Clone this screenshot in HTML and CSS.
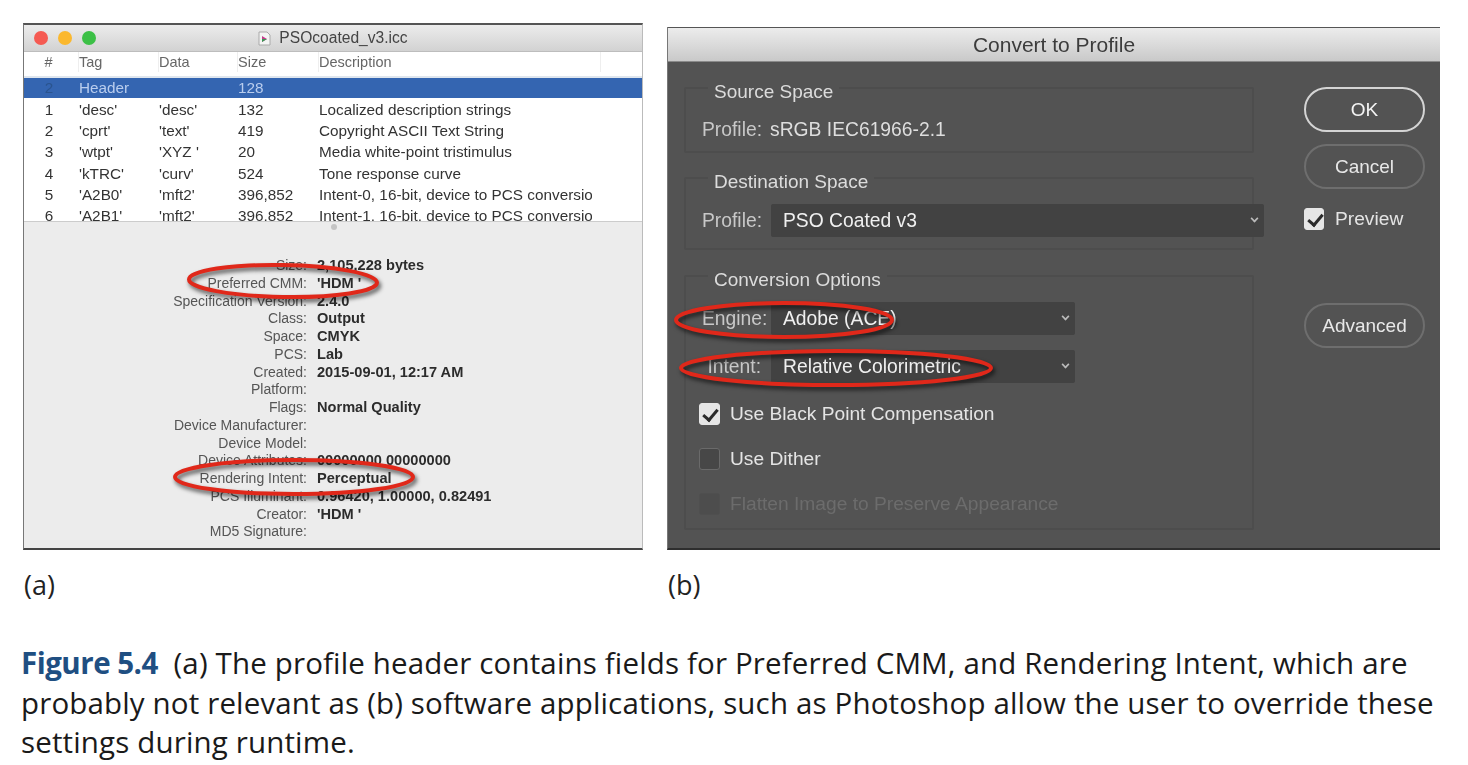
FILE: index.html
```html
<!DOCTYPE html>
<html lang="en">

<head>
  <meta charset="UTF-8">
  <title>Figure 5.4</title>
  <link rel="stylesheet" href="styles.css">
</head>

<body>
  <main class="page">
    <section class="figures">
      <div class="figure-a">
        <div class="mac-window">
          <div class="mac-title">
            <div class="lights">
              <span class="light red"></span>
              <span class="light yellow"></span>
              <span class="light green"></span>
            </div>
            <svg class="doc-icon" width="13" height="15" viewBox="0 0 13 15">
              <path d="M1 1h8l3 3v10H1z" fill="#f4f4f4" stroke="#aaa" stroke-width="1" />
              <path d="M4 5l5 3-5 3z" fill="#c43c8c" />
              <path d="M4 8l5 0-5 3z" fill="#3a9a55" />
            </svg>
            <span>PSOcoated_v3.icc</span>
          </div>
          <div class="tag-table">
            <div class="tag-head">
              <span class="num">#</span><span>Tag</span><span>Data</span><span>Size</span><span>Description</span>
            </div>
            <div class="tag-row selected">
              <span class="num">2</span><span>Header</span><span></span><span>128</span><span></span>
            </div>
            <div class="tag-row">
              <span class="num">1</span><span>'desc'</span><span>'desc'</span><span>132</span><span>Localized description strings</span>
            </div>
            <div class="tag-row">
              <span class="num">2</span><span>'cprt'</span><span>'text'</span><span>419</span><span>Copyright ASCII Text String</span>
            </div>
            <div class="tag-row">
              <span class="num">3</span><span>'wtpt'</span><span>'XYZ '</span><span>20</span><span>Media white-point tristimulus</span>
            </div>
            <div class="tag-row">
              <span class="num">4</span><span>'kTRC'</span><span>'curv'</span><span>524</span><span>Tone response curve</span>
            </div>
            <div class="tag-row">
              <span class="num">5</span><span>'A2B0'</span><span>'mft2'</span><span>396,852</span><span>Intent-0, 16-bit, device to PCS conversion</span>
            </div>
            <div class="tag-row">
              <span class="num">6</span><span>'A2B1'</span><span>'mft2'</span><span>396,852</span><span>Intent-1, 16-bit, device to PCS conversion</span>
            </div>
          </div>
          <div class="info">
            <span class="grip"></span>
            <dl class="info-list">
              <dt>Size:</dt><dd>2,105,228 bytes</dd>
              <dt>Preferred CMM:</dt><dd>'HDM '</dd>
              <dt>Specification Version:</dt><dd>2.4.0</dd>
              <dt>Class:</dt><dd>Output</dd>
              <dt>Space:</dt><dd>CMYK</dd>
              <dt>PCS:</dt><dd>Lab</dd>
              <dt>Created:</dt><dd>2015-09-01, 12:17 AM</dd>
              <dt>Platform:</dt><dd></dd>
              <dt>Flags:</dt><dd>Normal Quality</dd>
              <dt>Device Manufacturer:</dt><dd></dd>
              <dt>Device Model:</dt><dd></dd>
              <dt>Device Attributes:</dt><dd>00000000 00000000</dd>
              <dt>Rendering Intent:</dt><dd>Perceptual</dd>
              <dt>PCS Illuminant:</dt><dd>0.96420, 1.00000, 0.82491</dd>
              <dt>Creator:</dt><dd>'HDM '</dd>
              <dt>MD5 Signature:</dt><dd></dd>
            </dl>
          </div>
        </div>
        <p class="sub-label">(a)</p>
      </div>

      <div class="figure-b">
        <div class="ps-dialog">
          <div class="ps-title">Convert to Profile</div>
          <div class="ps-body">
            <div class="ps-main">
              <fieldset class="group group-source">
                <legend>Source Space</legend>
                <div class="field-row">
                  <span class="field-label">Profile:</span>
                  <span class="field-value">sRGB IEC61966-2.1</span>
                </div>
              </fieldset>
              <fieldset class="group group-dest">
                <legend>Destination Space</legend>
                <div class="field-row">
                  <span class="field-label">Profile:</span>
                  <div class="select select-wide">PSO Coated v3<span class="chevron"></span></div>
                </div>
              </fieldset>
              <fieldset class="group group-options">
                <legend>Conversion Options</legend>
                <div class="field-row">
                  <span class="field-label">Engine:</span>
                  <div class="select">Adobe (ACE)<span class="chevron"></span></div>
                </div>
                <div class="field-row">
                  <span class="field-label">Intent:</span>
                  <div class="select">Relative Colorimetric<span class="chevron"></span></div>
                </div>
                <label class="check-row first-check"><span class="check on"></span>Use Black Point Compensation</label>
                <label class="check-row"><span class="check"></span>Use Dither</label>
                <label class="check-row disabled"><span class="check"></span>Flatten Image to Preserve Appearance</label>
              </fieldset>
            </div>
            <div class="ps-side">
              <div class="pill primary">OK</div>
              <div class="pill">Cancel</div>
              <label class="check-row preview"><span class="check on"></span>Preview</label>
              <div class="pill advanced">Advanced</div>
            </div>
          </div>
        </div>
        <p class="sub-label">(b)</p>
      </div>
    </section>

    <p class="caption"><strong>Figure 5.4</strong>&nbsp; (a) The profile header contains fields for Preferred CMM, and Rendering Intent, which are<br>probably not relevant as (b) software applications, such as Photoshop allow the user to override these<br>settings during runtime.</p>

    <!-- red hand-drawn rings, page coordinates -->
    <svg class="rings" width="1468" height="765" viewBox="0 0 1468 765">
      <g fill="none" stroke="#e0281a" stroke-width="4">
        <ellipse cx="283" cy="281" rx="94" ry="16" transform="rotate(1 283 281)" />
        <ellipse cx="294" cy="477" rx="119" ry="17" />
        <ellipse cx="784" cy="320" rx="108" ry="17" />
        <ellipse cx="836" cy="368" rx="155" ry="17" />
      </g>
    </svg>
  </main>
</body>

</html>
```

FILE: styles.css
```css
* {
  margin: 0;
  padding: 0;
  box-sizing: border-box;
}

html,
body {
  background: #fff;
  overflow: hidden;
}

body {
  font-family: "Liberation Sans", Arial, sans-serif;
}

.page {
  position: relative;
  width: 1468px;
  height: 765px;
}

.figures {
  display: flex;
  gap: 24px;
  padding: 23px 0 0 23px;
}

.figure-b {
  padding-top: 4px;
}

.sub-label {
  font-family: "Open Sans", sans-serif;
  font-size: 27px;
  line-height: 34px;
  color: #222;
  margin-top: 18px;
  padding-left: 1px;
}

/* (a) mac window */
.mac-window {
  width: 620px;
  height: 527px;
  background: #ececec;
  border-top: 2px solid #555;
  border-left: 1px solid #777;
  border-right: 1px solid #bbb;
  border-bottom: 2px solid #444;
  filter: blur(0.7px);
  display: flex;
  flex-direction: column;
}

.mac-title {
  height: 27px;
  flex-shrink: 0;
  background: linear-gradient(#ececec, #d2d2d2);
  border-bottom: 1px solid #bdbdbd;
  display: flex;
  align-items: center;
  justify-content: center;
  gap: 8px;
  font-size: 15.6px;
  color: #444;
  position: relative;
}

.lights {
  position: absolute;
  left: 10px;
  top: 6px;
  display: flex;
  gap: 10px;
}

.light {
  width: 14px;
  height: 14px;
  border-radius: 50%;
}

.light.red {
  background: #f55a52;
}

.light.yellow {
  background: #fbb82e;
}

.light.green {
  background: #3cc046;
}

.tag-table {
  height: 170px;
  flex-shrink: 0;
  background: #fff;
  overflow: hidden;
  border-bottom: 1px solid #ccc;
}

.tag-head,
.tag-row {
  display: grid;
  grid-template-columns: 55px 80px 79px 81px 273px;
  align-items: center;
  font-size: 15.3px;
  white-space: nowrap;
  color: #333;
}

.tag-head {
  height: 26px;
  font-size: 14.5px;
  color: #666;
  align-items: start;
  border-bottom: 2px solid #dfe6ee;
}

.tag-head span {
  height: 20px;
  line-height: 20px;
  border-right: 1px solid #eee;
}

.tag-head span:last-child {
  width: 282px;
}

.tag-row {
  height: 21.3px;
}

.tag-row span {
  overflow: hidden;
}

.tag-row.selected {
  height: 20px;
  background: #3465b1;
  color: #b9cdee;
  margin-bottom: 1px;
}

.tag-row.selected .num {
  color: #2a548f;
}

.num {
  text-align: center;
  padding-right: 5px;
}

.info {
  flex: 1;
  position: relative;
  padding-top: 35px;
}

.grip {
  position: absolute;
  left: 307px;
  top: 2px;
  width: 6px;
  height: 6px;
  border-radius: 50%;
  background: #c4c4c4;
}

.info-list {
  display: grid;
  grid-template-columns: 283px 1fr;
  column-gap: 10px;
  grid-auto-rows: 17.75px;
  font-size: 14px;
  line-height: 17.75px;
}

.info-list dt {
  text-align: right;
  color: #555;
}

.info-list dd {
  font-size: 14.6px;
  font-weight: bold;
  color: #2c2c2c;
}

/* (b) photoshop dialog */
.ps-dialog {
  width: 773px;
  height: 523px;
  background: #535353;
  border-left: 1px solid #777;
  border-bottom: 2px solid #2e2e2e;
  filter: blur(0.7px);
  display: flex;
  flex-direction: column;
}

.ps-title {
  height: 35px;
  flex-shrink: 0;
  background: linear-gradient(#ececec, #c9c9c9);
  border-top: 1px solid #555;
  border-bottom: 1px solid #8a8a8a;
  text-align: center;
  font-size: 21px;
  line-height: 34px;
  color: #3c3c3c;
}

.ps-body {
  flex: 1;
  display: flex;
  padding: 11px 15px 0 16px;
}

.ps-main {
  width: 570px;
}

.group {
  border: 2px solid #4d4d4d;
  border-radius: 2px;
  padding: 0 0 0 16px;
  min-width: 0;
}

/* the padding drops the legend text below the group's border */
.group legend {
  margin-left: 6px;
  padding: 8px 6px 0;
  font-size: 19px;
  line-height: 22px;
  color: #dcdcdc;
}

.group-source {
  height: 80px;
}

.group-dest {
  height: 87px;
  margin-top: 10px;
}

.group-options {
  height: 269px;
  margin-top: 11px;
}

.field-row {
  display: flex;
  align-items: center;
  font-size: 19.3px;
  color: #dedede;
}

.group-source .field-row {
  padding-top: 16px;
}

.group-dest .field-row {
  padding-top: 11px;
}

.group-options .field-row {
  height: 33px;
  margin-top: 15px;
}

.group-options .field-row:first-of-type {
  margin-top: 11px;
}

.field-label {
  flex-shrink: 0;
  width: 69px;
  color: #c8c8c8;
}

.group-options .field-label {
  text-align: right;
  padding-right: 10px;
}

.field-value {
  margin-left: -1px;
}

.select {
  position: relative;
  flex-shrink: 0;
  width: 304px;
  height: 33px;
  line-height: 33px;
  background: #424242;
  border-radius: 2px;
  padding-left: 12px;
  color: #f0f0f0;
}

.select-wide {
  width: 493px;
}

.chevron {
  position: absolute;
  right: 6px;
  top: 11px;
  width: 7px;
  height: 7px;
  border-right: 2px solid #bbb;
  border-bottom: 2px solid #bbb;
  transform: rotate(45deg) scale(0.8);
}

.check-row {
  display: flex;
  align-items: center;
  gap: 10px;
  font-size: 19.2px;
  color: #e4e4e4;
  height: 22px;
  margin-top: 23px;
  margin-left: -3px;
}

.first-check {
  margin-top: 20px;
}

.check {
  position: relative;
  flex-shrink: 0;
  width: 21px;
  height: 22px;
  border-radius: 3px;
  background: #474747;
  border: 1px solid #6a6a6a;
}

.check.on {
  background: #e6e6e6;
  border-color: #e6e6e6;
}

.check.on::after {
  content: "";
  position: absolute;
  left: 6px;
  top: 2px;
  width: 6px;
  height: 12px;
  border-right: 3px solid #2b2b2b;
  border-bottom: 3px solid #2b2b2b;
  transform: rotate(40deg);
}

.check-row.disabled {
  color: #6c6c6c;
}

.check-row.disabled .check {
  background: #4d4d4d;
  border-color: #4f4f4f;
}

.ps-side {
  margin: 14px 0 0 50px;
  width: 121px;
  display: flex;
  flex-direction: column;
}

.pill {
  height: 45px;
  border: 2px solid #8a8a8a;
  border-radius: 23px;
  text-align: center;
  line-height: 41px;
  font-size: 19px;
  color: #e8e8e8;
}

.pill.primary {
  border-color: #d4d4d4;
  color: #f4f4f4;
}

.pill + .pill {
  margin-top: 12px;
}

.pill:not(.primary) {
  border-color: #6e6e6e;
}

.preview {
  margin: 19px 0 0;
  gap: 11px;
}

.preview .check {
  width: 20px;
}

.pill.advanced {
  margin-top: 73px;
}

/* caption */
.caption {
  font-family: "Open Sans", sans-serif;
  font-size: 29.5px;
  line-height: 39.5px;
  letter-spacing: 0.15px;
  color: #1a1a1a;
  padding-left: 21px;
  margin-top: 41px;
  white-space: nowrap;
}

.caption strong {
  color: #1f4f82;
  font-weight: 700;
  letter-spacing: -0.5px;
}

.rings {
  position: absolute;
  left: 0;
  top: 0;
  pointer-events: none;
  filter: drop-shadow(2px 3px 2px rgba(0, 0, 0, 0.65));
}
```
